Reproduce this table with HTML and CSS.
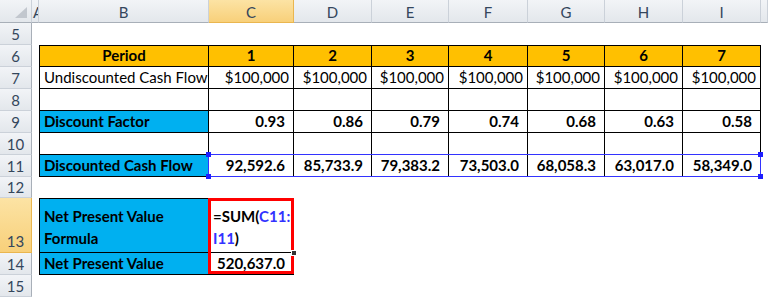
FILE: index.html
```html
<!DOCTYPE html>
<html lang="en">
<head>
    <meta charset="UTF-8">
    <title>Net Present Value</title>
    <link rel="stylesheet" href="styles.css">
</head>
<body>
    <div class="sheet">
        <!-- column headers -->
        <div class="ch corner"><span class="tri"></span></div>
        <div class="ch col-a">A</div>
        <div class="ch">B</div>
        <div class="ch sel">C</div>
        <div class="ch">D</div>
        <div class="ch">E</div>
        <div class="ch">F</div>
        <div class="ch">G</div>
        <div class="ch">H</div>
        <div class="ch">I</div>
        <div class="ch"></div>

        <div class="rh">5</div>

        <div class="rh">6</div>
        <div class="cell t top first org b ctr">Period</div>
        <div class="cell t top org b ctr">1</div>
        <div class="cell t top org b ctr">2</div>
        <div class="cell t top org b ctr">3</div>
        <div class="cell t top org b ctr">4</div>
        <div class="cell t top org b ctr">5</div>
        <div class="cell t top org b ctr">6</div>
        <div class="cell t top org b ctr">7</div>

        <div class="rh">7</div>
        <div class="cell t first">Undiscounted Cash Flow</div>
        <div class="cell t r">$100,000</div>
        <div class="cell t r">$100,000</div>
        <div class="cell t r">$100,000</div>
        <div class="cell t r">$100,000</div>
        <div class="cell t r">$100,000</div>
        <div class="cell t r">$100,000</div>
        <div class="cell t r">$100,000</div>

        <div class="rh">8</div>
        <div class="cell t first"></div>
        <div class="cell t"></div>
        <div class="cell t"></div>
        <div class="cell t"></div>
        <div class="cell t"></div>
        <div class="cell t"></div>
        <div class="cell t"></div>
        <div class="cell t"></div>

        <div class="rh">9</div>
        <div class="cell t first blu b">Discount Factor</div>
        <div class="cell t r num b">0.93</div>
        <div class="cell t r num b">0.86</div>
        <div class="cell t r num b">0.79</div>
        <div class="cell t r num b">0.74</div>
        <div class="cell t r num b">0.68</div>
        <div class="cell t r num b">0.63</div>
        <div class="cell t r num b">0.58</div>

        <div class="rh">10</div>
        <div class="cell t first"></div>
        <div class="cell t"></div>
        <div class="cell t"></div>
        <div class="cell t"></div>
        <div class="cell t"></div>
        <div class="cell t"></div>
        <div class="cell t"></div>
        <div class="cell t"></div>

        <div class="rh">11</div>
        <div class="cell t first blu b">Discounted Cash Flow</div>
        <div class="cell t r num b">92,592.6</div>
        <div class="cell t r num b">85,733.9</div>
        <div class="cell t r num b">79,383.2</div>
        <div class="cell t r num b">73,503.0</div>
        <div class="cell t r num b">68,058.3</div>
        <div class="cell t r num b">63,017.0</div>
        <div class="cell t r num b">58,349.0</div>

        <div class="rh">12</div>

        <div class="rh sel rh-bottom">13</div>
        <div class="cell t top first blu b wrap"><span>Net Present Value<br>Formula</span></div>
        <div class="cell t top b wrap formula"><span>=SUM(<span class="ref">C11:</span><br><span class="ref">I11</span>)</span></div>

        <div class="rh">14</div>
        <div class="cell t first blu b">Net Present Value</div>
        <div class="cell t r num b">520,637.0</div>

        <div class="rh">15</div>

        <!-- overlays: formula reference, annotation box, fill handle -->
        <div class="refbox">
            <span class="knob tl"></span>
            <span class="knob bl"></span>
            <span class="knob tr"></span>
            <span class="knob br"></span>
        </div>
        <div class="redbox"></div>
        <div class="fill-handle"></div>
    </div>
</body>
</html>
```

FILE: styles.css
```css
body {
    margin: 0;
    background-color: #fff;
    font-family: Lato, "Liberation Sans", sans-serif;
    font-size: 15px;
    color: #000;
}
.sheet {
    position: relative;
    display: grid;
    grid-template-columns: 32px 7px 170px 85px 78px 77px 79px 77px 78px 78px 7px;
    grid-template-rows: 23px repeat(7, 22px) 21px 55px 22px 22px;
}

/* headers */
.ch, .rh {
    display: flex;
    align-items: center;
    justify-content: center;
    background: linear-gradient(#f2f4f7, #e3e7ec);
    color: #34465c;
    overflow: hidden;
}
.ch {
    padding-top: 2px;
    border-right: 1px solid #cbd1d9;
    border-bottom: 1px solid #a8afb8;
}
.rh {
    grid-column: 1;
    border-right: 1px solid #a8afb8;
    border-bottom: 1px solid #cbd1d9;
}
.ch.sel, .rh.sel {
    background: linear-gradient(#fce3a4, #f8d07a);
    border-color: #eab64f;
}
.rh-bottom {
    align-items: flex-end;
    padding-bottom: 2px;
}
.col-a {
    justify-content: flex-start;
    text-indent: 1px;
}
.corner {
    justify-content: flex-end;
    align-items: flex-end;
    padding: 0 4px 4px 0;
}
.tri {
    width: 0;
    height: 0;
    border-left: 12px solid transparent;
    border-bottom: 11px solid #c2c7ce;
}

/* cells */
.cell {
    display: flex;
    align-items: flex-end;
    padding: 0 4px 1px;
    line-height: 19px;
    white-space: nowrap;
    overflow: hidden;
}
.t {
    border-right: 1px solid #000;
    border-bottom: 1px solid #000;
}
.top {
    border-top: 1px solid #000;
}
.first {
    grid-column: 3;
    border-left: 1px solid #000;
}
.org {
    background-color: #ffc000;
}
.blu {
    background-color: #00b0f0;
}
.b {
    font-weight: bold;
}
.r {
    justify-content: flex-end;
}
.num {
    padding-right: 8px;
}
.ctr {
    justify-content: center;
}
.wrap {
    white-space: normal;
    line-height: 22px;
    padding-bottom: 3px;
}
.formula {
    border-right: none;
    border-top: none;
}
.ref {
    color: #3232ff;
}

/* overlays */
.refbox {
    position: absolute;
    grid-row: 8 / 9;
    grid-column: 4 / 11;
    top: -1px;
    left: -1px;
    right: 0;
    bottom: 0;
    border: 1px solid #3333ff;
}
.knob {
    position: absolute;
    width: 5px;
    height: 5px;
    background-color: #1e1eff;
}
.knob.tl { top: -3px; left: -3px; }
.knob.bl { bottom: -3px; left: -3px; }
.knob.tr { top: -3px; right: -3px; }
.knob.br { bottom: -3px; right: -3px; }
.redbox {
    position: absolute;
    grid-row: 10 / 12;
    grid-column: 4 / 5;
    top: 0;
    left: -1px;
    right: 0;
    bottom: 1px;
    border: 3px solid #ff0000;
}
.fill-handle {
    position: absolute;
    grid-row: 10 / 11;
    grid-column: 4 / 5;
    right: -3px;
    bottom: -3px;
    width: 4px;
    height: 4px;
    background-color: #333;
    border: 1px solid #fff;
}
```
